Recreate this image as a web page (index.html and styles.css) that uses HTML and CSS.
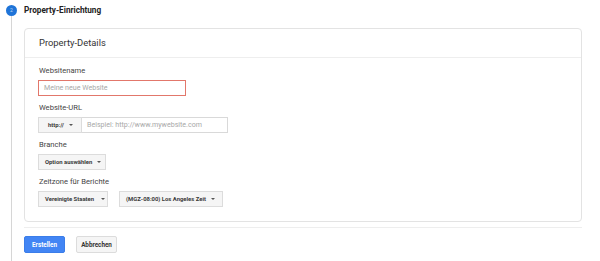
FILE: index.html
```html
<!DOCTYPE html>
<html lang="de">
<head>
<meta charset="utf-8">
<link rel="stylesheet" href="styles.css">
</head>
<body>
<div class="stepper">
  <div class="rail">
    <div class="step-num">2</div>
    <div class="rail-line"></div>
  </div>
  <div class="step-body">
    <div class="step-title">Property-Einrichtung</div>
    <div class="card">
      <div class="card-head">Property-Details</div>
      <div class="card-body">
        <div class="field">
          <div class="label">Websitename</div>
          <div class="input input-error"><span class="placeholder">Meine neue Website</span></div>
        </div>
        <div class="field">
          <div class="label">Website-URL</div>
          <div class="row">
            <div class="select sel-proto">http:// <span class="caret"></span></div>
            <div class="input input-url"><span class="placeholder">Beispiel: http://www.mywebsite.com</span></div>
          </div>
        </div>
        <div class="field">
          <div class="label">Branche</div>
          <div class="row">
            <div class="select sel-branch">Option auswählen <span class="caret"></span></div>
          </div>
        </div>
        <div class="field">
          <div class="label">Zeitzone für Berichte</div>
          <div class="row gap">
            <div class="select sel-country">Vereinigte Staaten <span class="caret"></span></div>
            <div class="select sel-zone">(MGZ-08:00) Los Angeles Zeit <span class="caret"></span></div>
          </div>
        </div>
      </div>
    </div>
    <div class="divider"></div>
    <div class="actions">
      <button class="btn btn-primary">Erstellen</button>
      <button class="btn btn-default">Abbrechen</button>
    </div>
  </div>
</div>
</body>
</html>
```
FILE: styles.css
```css
html, body {
  margin: 0;
  padding: 0;
  background: #fff;
  font-family: Roboto, "Liberation Sans", Arial, sans-serif;
  color: #333;
}
.stepper {
  display: grid;
  grid-template-columns: 24px 1fr;
  height: 261px;
  overflow: hidden;
}
.rail {
  display: flex;
  flex-direction: column;
  align-items: center;
  padding-top: 5px;
  padding-right: 1px;
}
.step-num {
  width: 11px;
  height: 11px;
  border-radius: 50%;
  background: #1f74d8;
  color: #bcd6f6;
  font-size: 5px;
  line-height: 11px;
  text-align: center;
  flex: none;
}
.rail-line {
  flex: 1;
  width: 1px;
  background: #d6d6d6;
}
.step-body {
  padding-right: 18px;
}
.step-title {
  height: 21px;
  line-height: 21px;
  font-size: 8.2px;
  font-weight: bold;
  color: #222;
  margin-bottom: 7px;
}
.card {
  border: 1px solid #e3e3e3;
  border-radius: 4px;
}
.card-head {
  height: 28px;
  line-height: 27px;
  padding-left: 14px;
  font-size: 9.4px;
  color: #333;
  border-bottom: 1px solid #eeeeee;
}
.card-body {
  padding: 8px 13px 14px;
  display: flex;
  flex-direction: column;
  gap: 7px;
}
.label {
  font-size: 7.6px;
  line-height: 10px;
  color: #444;
  margin-bottom: 4px;
  padding-left: 1px;
}
.row {
  display: flex;
}
.row.gap {
  gap: 11px;
}
.input {
  box-sizing: border-box;
  height: 16px;
  border: 1px solid #d9d9d9;
  padding-left: 5px;
  font-size: 7.1px;
  line-height: 14px;
  background: #fff;
  white-space: nowrap;
  overflow: hidden;
}
.input-error {
  width: 148px;
  border-color: #e2776b;
}
.input-url {
  width: 146px;
  border-left: none;
}
.placeholder {
  color: #a8a8a8;
}
.select {
  box-sizing: border-box;
  height: 16px;
  border: 1px solid #dcdcdc;
  background: #f5f5f5;
  padding: 0 5px 0 6px;
  font-size: 5.9px;
  font-weight: bold;
  color: #3a3a3a;
  line-height: 14px;
  display: flex;
  align-items: center;
  gap: 5px;
  white-space: nowrap;
}
.sel-proto {
  width: 44px;
  padding-left: 9px;
}
.sel-branch {
  width: 68px;
}
.sel-country {
  width: 70px;
  gap: 7px;
}
.sel-zone {
  width: 104px;
}
.caret {
  width: 0;
  height: 0;
  border-left: 2px solid transparent;
  border-right: 2px solid transparent;
  border-top: 2px solid #555;
}
.divider {
  height: 1px;
  background: #eeeeee;
  margin-top: 5px;
}
.actions {
  display: flex;
  gap: 11px;
  margin-top: 8px;
}
.btn {
  box-sizing: border-box;
  height: 17px;
  width: 41px;
  padding: 0;
  font-family: Roboto, "Liberation Sans", Arial, sans-serif;
  font-size: 6.3px;
  font-weight: bold;
  border-radius: 2px;
  cursor: pointer;
}
.btn-primary {
  background: #4285f4;
  border: 1px solid #3b7de9;
  color: #fff;
}
.btn-default {
  background: #f5f5f5;
  border: 1px solid #dcdcdc;
  color: #333;
}
```
